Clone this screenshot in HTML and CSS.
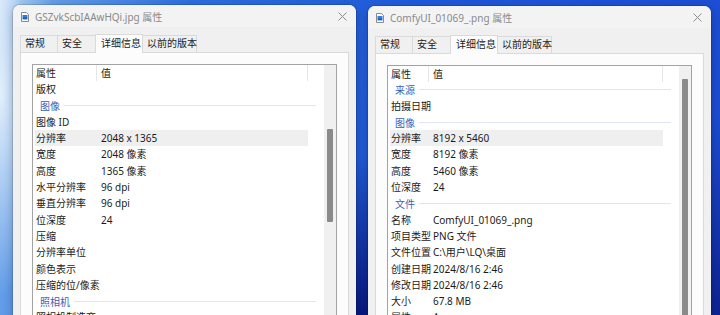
FILE: index.html
```html
<!DOCTYPE html>
<html lang="zh-CN">
<head>
    <meta charset="UTF-8">
    <title>属性</title>
    <link rel="stylesheet" href="styles.css">
</head>
<body>
    <div class="desktop">
        <div class="dialog">
            <div class="titlebar">
                <svg class="file-icon" width="8" height="10" viewBox="0 0 8 10">
                    <path d="M0.5 0.5h5l2 2v7h-7z" fill="#fff" stroke="#8a8a8a"/>
                    <rect x="1.5" y="3" width="5" height="4.5" fill="#2f7fe0"/>
                    <rect x="2" y="5.5" width="4" height="1.5" fill="#1b5bb8"/>
                </svg>
                <span class="title">GSZvkScbIAAwHQi.jpg 属性</span>
                <svg class="close" width="9" height="9" viewBox="0 0 9 9">
                    <path d="M0.5 0.5l8 8M8.5 0.5l-8 8" stroke="#8c8c8c" stroke-width="1"/>
                </svg>
            </div>
            <div class="tabs">
                <div class="tab w1">常规</div>
                <div class="tab w2">安全</div>
                <div class="tab w3 active">详细信息</div>
                <div class="tab w4">以前的版本</div>
            </div>
            <div class="panel">
                <div class="list key-wide">
                    <div class="cols">
                        <div class="row head"><span class="key">属性</span><span class="val">值</span></div>
                        <div class="row"><span class="key">版权</span><span class="val"></span></div>
                        <div class="group"><span>图像</span></div>
                        <div class="row"><span class="key">图像 ID</span><span class="val"></span></div>
                        <div class="row selected"><span class="key">分辨率</span><span class="val">2048 x 1365</span></div>
                        <div class="row"><span class="key">宽度</span><span class="val">2048 像素</span></div>
                        <div class="row"><span class="key">高度</span><span class="val">1365 像素</span></div>
                        <div class="row"><span class="key">水平分辨率</span><span class="val">96 dpi</span></div>
                        <div class="row"><span class="key">垂直分辨率</span><span class="val">96 dpi</span></div>
                        <div class="row"><span class="key">位深度</span><span class="val">24</span></div>
                        <div class="row"><span class="key">压缩</span><span class="val"></span></div>
                        <div class="row"><span class="key">分辨率单位</span><span class="val"></span></div>
                        <div class="row"><span class="key">颜色表示</span><span class="val"></span></div>
                        <div class="row"><span class="key">压缩的位/像素</span><span class="val"></span></div>
                        <div class="group"><span>照相机</span></div>
                        <div class="row"><span class="key">照相机制造商</span><span class="val"></span></div>
                    </div>
                    <div class="scrollbar"><div class="thumb thumb-mid"></div></div>
                </div>
            </div>
        </div>

        <div class="dialog second">
            <div class="titlebar">
                <svg class="file-icon" width="8" height="10" viewBox="0 0 8 10">
                    <path d="M0.5 0.5h5l2 2v7h-7z" fill="#fff" stroke="#8a8a8a"/>
                    <rect x="1.5" y="3" width="5" height="4.5" fill="#2f7fe0"/>
                    <rect x="2" y="5.5" width="4" height="1.5" fill="#1b5bb8"/>
                </svg>
                <span class="title">ComfyUI_01069_.png 属性</span>
                <svg class="close" width="9" height="9" viewBox="0 0 9 9">
                    <path d="M0.5 0.5l8 8M8.5 0.5l-8 8" stroke="#8c8c8c" stroke-width="1"/>
                </svg>
            </div>
            <div class="tabs">
                <div class="tab w1">常规</div>
                <div class="tab w2">安全</div>
                <div class="tab w3 active">详细信息</div>
                <div class="tab w4">以前的版本</div>
            </div>
            <div class="panel">
                <div class="list key-narrow">
                    <div class="cols">
                        <div class="row head"><span class="key">属性</span><span class="val">值</span></div>
                        <div class="body scrolled">
                            <div class="group"><span>来源</span></div>
                            <div class="row"><span class="key">拍摄日期</span><span class="val"></span></div>
                            <div class="group"><span>图像</span></div>
                            <div class="row selected"><span class="key">分辨率</span><span class="val">8192 x 5460</span></div>
                            <div class="row"><span class="key">宽度</span><span class="val">8192 像素</span></div>
                            <div class="row"><span class="key">高度</span><span class="val">5460 像素</span></div>
                            <div class="row"><span class="key">位深度</span><span class="val">24</span></div>
                            <div class="group"><span>文件</span></div>
                            <div class="row"><span class="key">名称</span><span class="val">ComfyUI_01069_.png</span></div>
                            <div class="row"><span class="key">项目类型</span><span class="val">PNG 文件</span></div>
                            <div class="row"><span class="key">文件位置</span><span class="val">C:\用户\LQ\桌面</span></div>
                            <div class="row"><span class="key">创建日期</span><span class="val">2024/8/16 2:46</span></div>
                            <div class="row"><span class="key">修改日期</span><span class="val">2024/8/16 2:46</span></div>
                            <div class="row"><span class="key">大小</span><span class="val">67.8 MB</span></div>
                            <div class="row"><span class="key">属性</span><span class="val">A</span></div>
                        </div>
                    </div>
                    <div class="scrollbar"><div class="thumb thumb-top"></div></div>
                </div>
            </div>
        </div>
    </div>
</body>
</html>
```

FILE: styles.css
```css
* {
    box-sizing: border-box;
}
body {
    margin: 0;
    width: 720px;
    height: 315px;
    overflow: hidden;
    font-family: "Noto Sans", "Noto Sans CJK SC", sans-serif;
    font-size: 10px;
    color: #1b1b1b;
    background:
        radial-gradient(ellipse 60px 200px at 0 30%, rgba(230, 242, 252, 0.95), rgba(230, 242, 252, 0) 100%),
        radial-gradient(ellipse 200px 160px at 50% 100%, rgba(6, 18, 120, 0.9), rgba(6, 18, 120, 0) 100%),
        radial-gradient(ellipse 120px 200px at 100% 100%, rgba(10, 24, 130, 0.8), rgba(10, 24, 130, 0) 100%),
        linear-gradient(100deg, #cfe2f7 0%, #6fa6ea 3%, #2c6ee0 25%, #1f58d8 55%, #1c4bd2 100%);
}
.desktop {
    display: flex;
    align-items: flex-start;
    gap: 12px;
    padding-left: 13px;
}
.dialog {
    width: 343px;
    height: 340px;
    margin-top: 5px;
    display: flex;
    flex-direction: column;
    background-color: #f0f0f0;
    border-radius: 7px 7px 0 0;
    box-shadow: 0 0 0 1px rgba(0, 0, 0, 0.12), 0 3px 10px rgba(0, 0, 0, 0.25);
    overflow: hidden;
}
.dialog.second {
    margin-top: 6px;
}
.titlebar {
    height: 22px;
    display: flex;
    align-items: center;
    padding: 1px 9px 0 8px;
    background-color: #f3f3f3;
    color: #8a8a8a;
}
.file-icon {
    margin-right: 6px;
}
.title {
    flex: 1;
    font-size: 10px;
}
.tabs {
    display: flex;
    align-items: flex-end;
    height: 18px;
    margin-top: 7px;
    padding-left: 7px;
    position: relative;
    z-index: 1;
}
.tab {
    height: 17px;
    line-height: 15px;
    padding-left: 4px;
    background-color: #f0f0f0;
    border: 1px solid #dadada;
    border-bottom: none;
    margin-right: -1px;
    white-space: nowrap;
}
.tab.w1 { width: 38px; }
.tab.w2 { width: 39px; }
.tab.w3 { width: 48px; }
.tab.w4 { width: 55px; }
.tab.active {
    height: 19px;
    margin-bottom: -1px;
    padding-top: 1px;
    padding-left: 5px;
    background-color: #fcfcfc;
}
.panel {
    flex: 1;
    margin: 0 7px;
    padding: 11px;
    background-color: #fcfcfc;
    border: 1px solid #dadada;
}
.list {
    height: 100%;
    display: flex;
    background-color: #fff;
    border: 1px solid #a3a3a3;
    overflow: hidden;
}
.cols {
    flex: 1;
    padding-left: 2px;
    overflow: hidden;
}
.key-wide { --key: 62px; }
.key-narrow { --key: 39px; }
.row {
    display: flex;
    width: 273px;
    height: 16.3px;
    line-height: 16.3px;
    white-space: nowrap;
}
.key {
    width: var(--key);
    padding-left: 1px;
    overflow: visible;
}
.val {
    flex: 1;
    padding-left: 4px;
}
.row.head .key,
.row.head .val {
    border-right: 1px solid #e6e6e6;
}
.row.selected {
    background-color: #efefef;
}
.group {
    display: flex;
    align-items: center;
    height: 16.3px;
    padding-left: 5px;
    padding-right: 8px;
    color: #3c5fb4;
}
.group::after {
    content: "";
    flex: 1;
    height: 1px;
    margin-left: 4px;
    background-color: #dfe5f3;
}
.body.scrolled {
    margin-top: -1px;
}
.scrollbar {
    width: 12px;
    position: relative;
    background-color: #f0f0f0;
}
.thumb {
    position: absolute;
    left: 3px;
    width: 6px;
    border-radius: 1px;
    background-color: #8a8a8a;
}
.thumb-mid {
    top: 64px;
    height: 93px;
}
.thumb-top {
    top: 13px;
    height: 400px;
}
```
